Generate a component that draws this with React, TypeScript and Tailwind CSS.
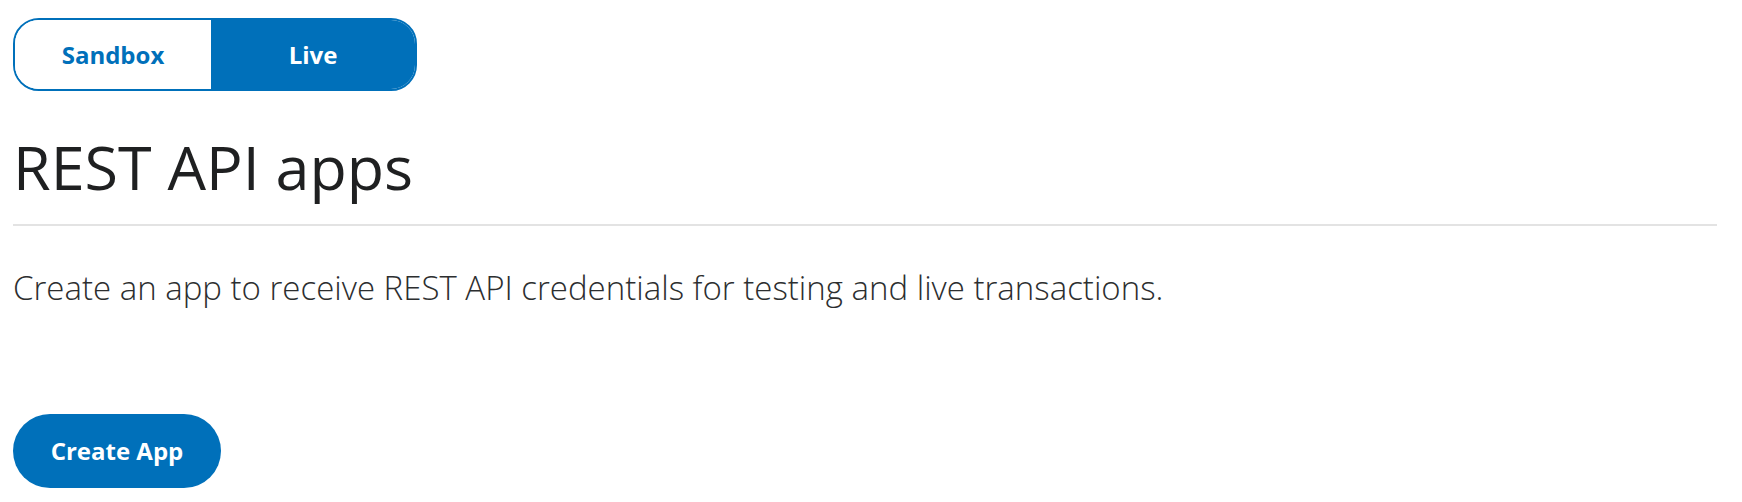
import React, { useState } from 'react';

const App = () => {
  const [env, setEnv] = useState<'sandbox' | 'live'>('live');

  return (
    <div className="min-h-screen bg-white font-['Open_Sans',sans-serif] text-[#2c2e2f]">
      <div className="pl-[13px] pr-[25px] pt-[18px]">
        {/* Environment toggle */}
        <div className="flex w-[404px] h-[73px] rounded-[26px] border-2 border-[#0070ba] overflow-hidden">
          <button
            onClick={() => setEnv('sandbox')}
            className={`flex-1 flex items-center justify-center text-[24px] font-bold ${env === 'sandbox' ? 'bg-[#0070ba] text-white' : 'bg-white text-[#0070ba]'}`}
          >
            Sandbox
          </button>
          <button
            onClick={() => setEnv('live')}
            className={`w-[204px] flex items-center justify-center text-[24px] font-bold ${env === 'live' ? 'bg-[#0070ba] text-white' : 'bg-white text-[#0070ba]'}`}
          >
            Live
          </button>
        </div>

        <h1 className="mt-[40px] text-[61px] leading-[72px] font-normal text-[#1f2021]">REST API apps</h1>
        <div className="mt-[21px] h-[2px] bg-[#e3e3e3]" />

        <p className="mt-[40px] text-[33px] leading-[44px] font-light text-[#2c2e2f]">
          Create an app to receive REST API credentials for testing and live transactions.
        </p>

        <button className="mt-[104px] w-[208px] h-[74px] rounded-full bg-[#0070ba] text-white text-[24px] font-bold">
          Create App
        </button>
      </div>
    </div>
  );
};

export default App;
